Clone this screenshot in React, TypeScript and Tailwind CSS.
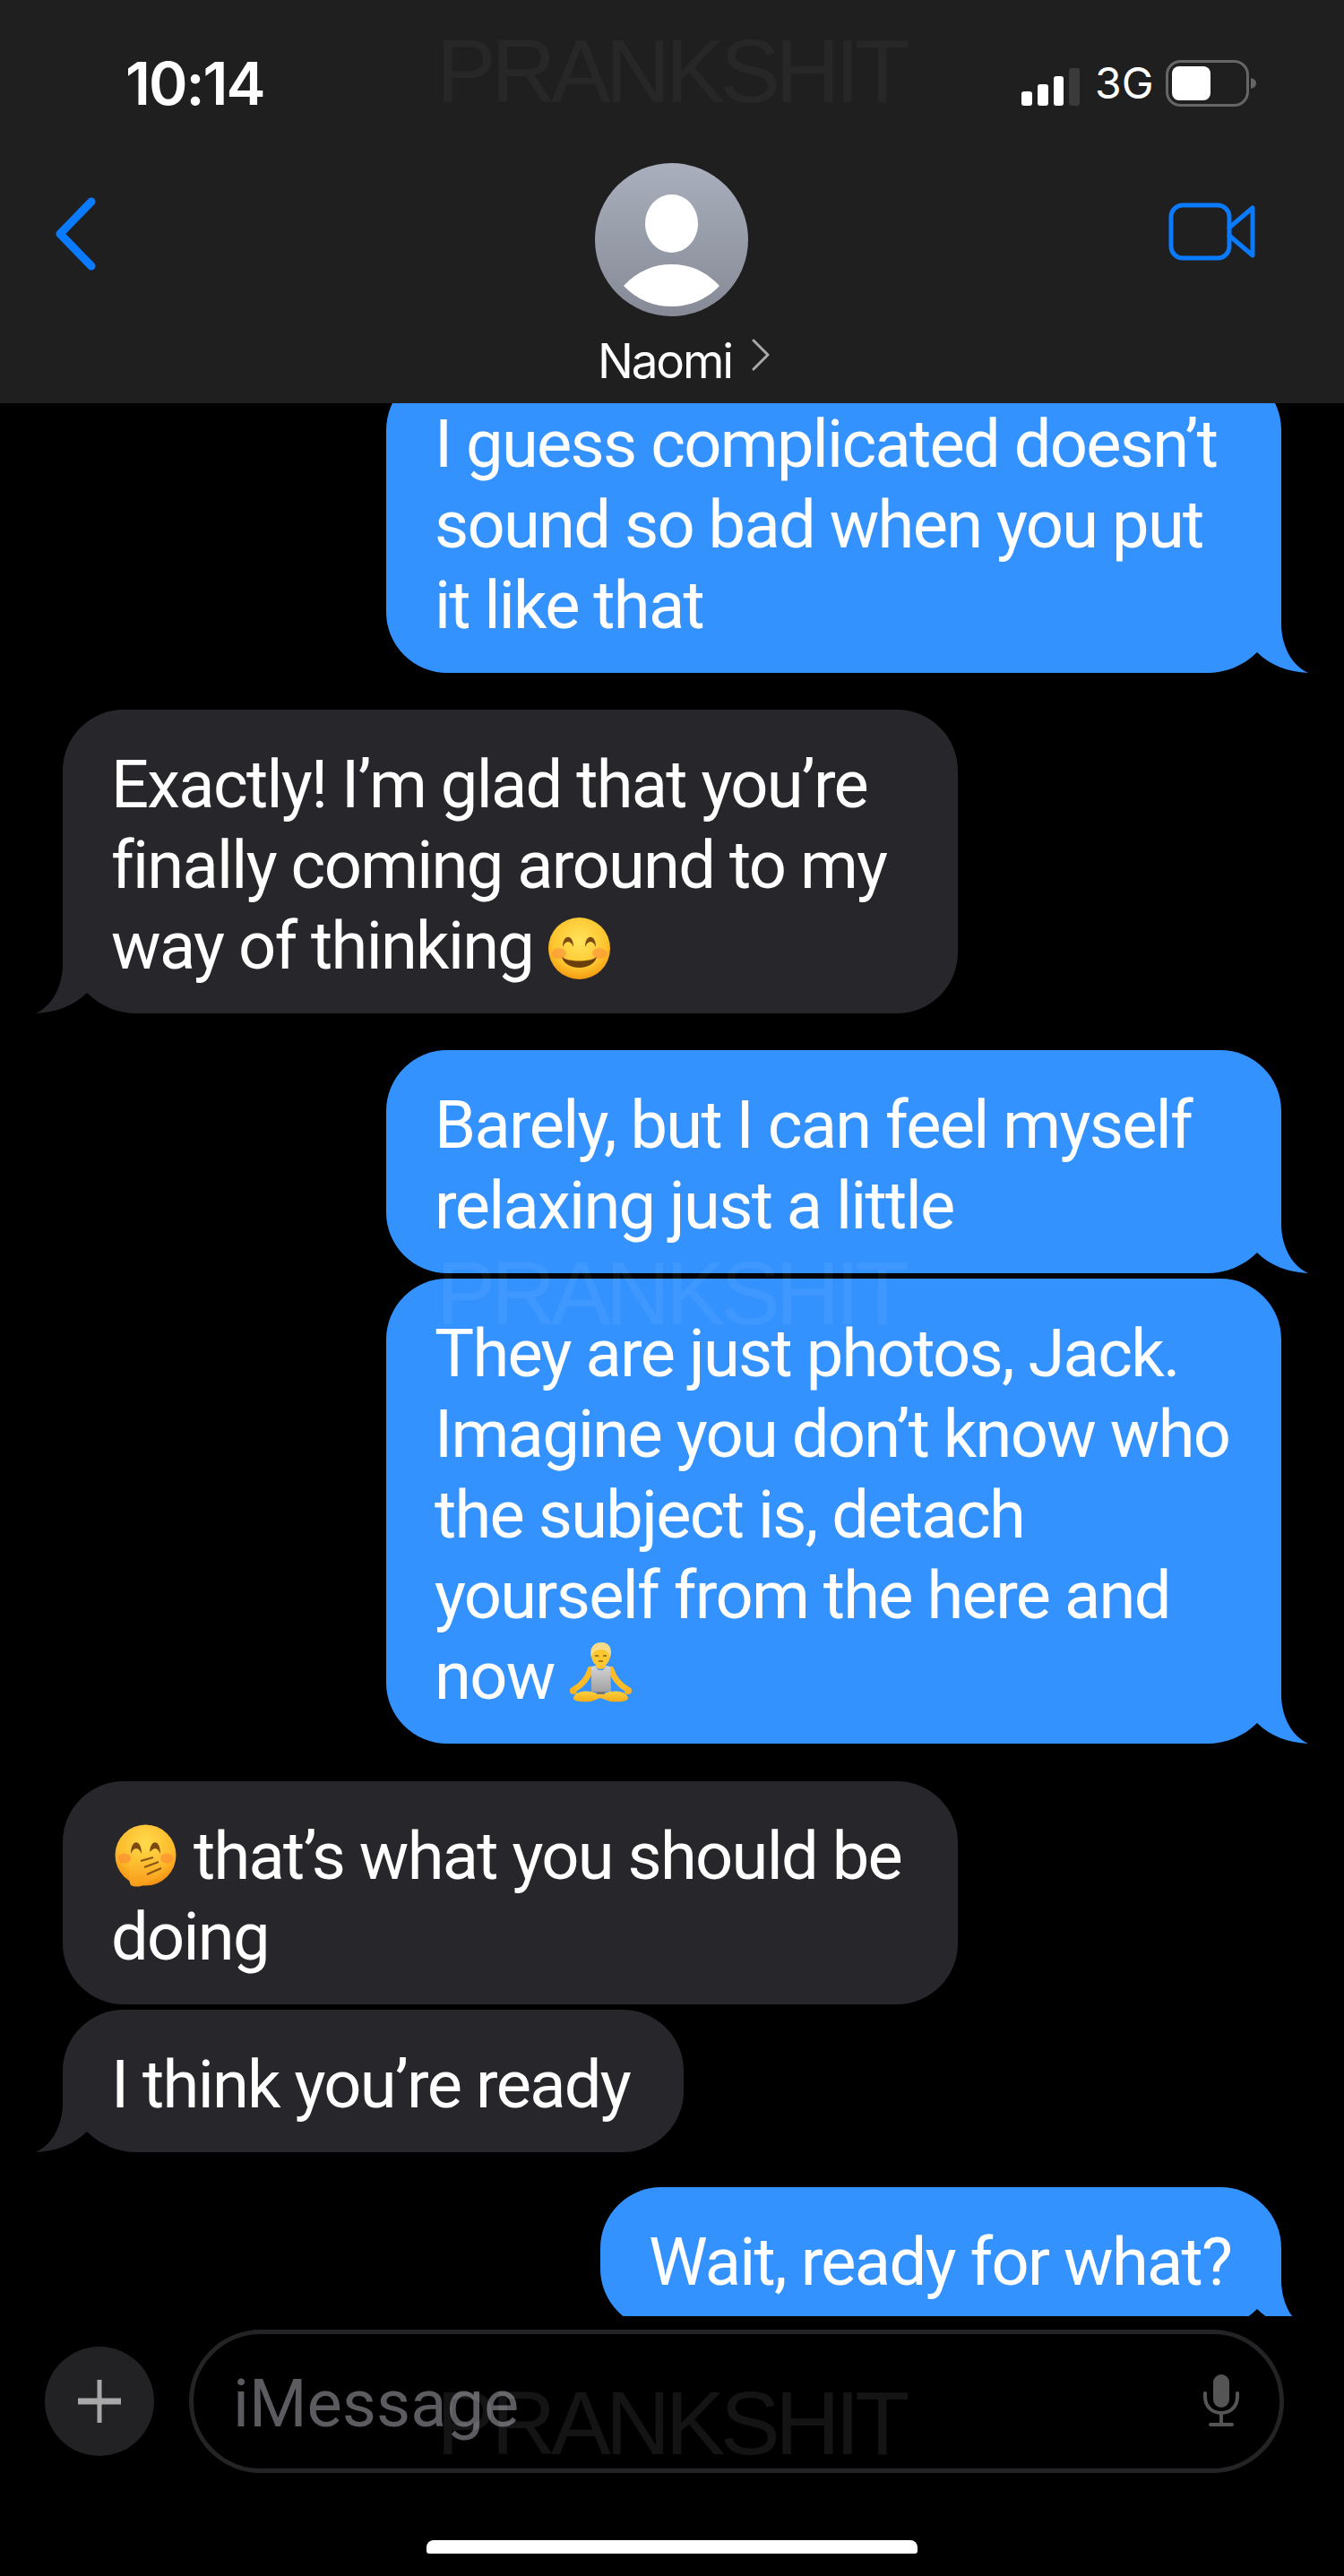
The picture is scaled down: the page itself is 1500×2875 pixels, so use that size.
import type { ReactNode } from "react"

const TailRight = ({ color }: { color: string }) => (
  <svg viewBox="-90 -90 120 90" className="absolute right-[-30px] bottom-0 w-[120px] h-[90px]">
    <path
      d="M0 -90 L0 -55 C0 -30 12 -8 30 0 C8 -1 -12 -8 -27 -23 C-42 -8 -62 0 -83 0 L-90 0 L-90 -90 Z"
      fill={color}
    />
  </svg>
)

const TailLeft = ({ color }: { color: string }) => (
  <svg viewBox="-30 -90 120 90" className="absolute left-[-30px] bottom-0 w-[120px] h-[90px]">
    <path
      d="M0 -90 L0 -55 C0 -30 -12 -8 -30 0 C-8 -1 12 -8 27 -23 C42 -8 62 0 83 0 L90 0 L90 -90 Z"
      fill={color}
    />
  </svg>
)

interface BubbleProps {
  mine?: boolean
  tail?: boolean
  width: string
  className?: string
  children: ReactNode
}

const Bubble = ({ mine, tail = true, width, className = "", children }: BubbleProps) => {
  const color = mine ? "#3492ff" : "#27272b"
  const shape = !tail
    ? "rounded-[68px]"
    : mine
      ? "rounded-[68px] rounded-br-[90px]"
      : "rounded-[68px] rounded-bl-[90px]"

  return (
    <div
      className={`relative ${mine ? "self-end bg-[#3492ff]" : "self-start bg-[#27272b]"} ${shape} ${width} ${className}`}
    >
      {tail && (mine ? <TailRight color={color} /> : <TailLeft color={color} />)}
      <div className="relative pl-[54px] pt-[39px] pb-[30px] text-white font-['Roboto',sans-serif] text-[74px] leading-[90px] tracking-[-1.7px] whitespace-nowrap">
        {children}
      </div>
    </div>
  )
}

const SmileEmoji = () => (
  <svg viewBox="0 0 69 69" className="inline-block w-[69px] h-[69px] align-[-12px]">
    <defs>
      <radialGradient id="smileFace" cx="50%" cy="38%" r="62%">
        <stop offset="0%" stopColor="#ffe45c" />
        <stop offset="70%" stopColor="#fdc52e" />
        <stop offset="100%" stopColor="#f49a12" />
      </radialGradient>
    </defs>
    <circle cx="34.5" cy="34.5" r="34.5" fill="url(#smileFace)" />
    <ellipse cx="12" cy="40" rx="8" ry="6" fill="#fb8a3c" opacity="0.55" />
    <ellipse cx="57" cy="40" rx="8" ry="6" fill="#fb8a3c" opacity="0.55" />
    <path d="M16 33 C16 18 28 18 28 33 C25 25 19 25 16 33 Z" fill="#7a4a12" />
    <path d="M41 33 C41 18 53 18 53 33 C50 25 44 25 41 33 Z" fill="#7a4a12" />
    <path d="M15 44 C22 50 47 50 54 44 C50 60 19 60 15 44 Z" fill="#6b3f0c" />
  </svg>
)

const HandEmoji = () => (
  <svg viewBox="0 0 69 71" className="inline-block w-[69px] h-[71px] align-[-10px] ml-[4px] mr-[19px]">
    <defs>
      <radialGradient id="handFace" cx="50%" cy="30%" r="72%">
        <stop offset="0%" stopColor="#ffdb4d" />
        <stop offset="65%" stopColor="#fdb92a" />
        <stop offset="100%" stopColor="#f28c0f" />
      </radialGradient>
      <linearGradient id="handSkin" x1="0" y1="0" x2="0" y2="1">
        <stop offset="0%" stopColor="#ffcf3f" />
        <stop offset="100%" stopColor="#f79a1a" />
      </linearGradient>
    </defs>
    <circle cx="34.5" cy="34.5" r="34" fill="url(#handFace)" />
    <ellipse cx="11" cy="38" rx="7" ry="5.5" fill="#fb7d35" opacity="0.5" />
    <ellipse cx="58" cy="38" rx="7" ry="5.5" fill="#fb7d35" opacity="0.5" />
    <path d="M18 33 C18 16 30 16 30 33 C27 25 21 25 18 33 Z" fill="#7a4a12" />
    <path d="M39 33 C39 16 51 16 51 33 C48 25 42 25 39 33 Z" fill="#7a4a12" />
    <path
      d="M18 68 C25 72 36 68 42 62 C50 58 55 52 52 49 C55 45 53 41 49 42 C50 37 46 35 43 37 C46 33 44 29 40 30 L29 39 C27 35 26 33 25 37 L23 43 L18 46 C16 55 15 62 18 68 Z"
      fill="url(#handSkin)"
    />
    <path d="M29 41 L43 37 M33 48 L49 42 M36 56 L52 49" stroke="#8a5410" strokeWidth="2" fill="none" />
  </svg>
)

const MeditateEmoji = () => (
  <svg viewBox="0 0 71 67" className="inline-block w-[71px] h-[67px] align-[-4px]">
    <defs>
      <linearGradient id="tank" x1="0" y1="0" x2="0" y2="1">
        <stop offset="0%" stopColor="#d4d4d4" />
        <stop offset="100%" stopColor="#a2a2a2" />
      </linearGradient>
      <linearGradient id="skin" x1="0" y1="0" x2="0" y2="1">
        <stop offset="0%" stopColor="#ffd23e" />
        <stop offset="100%" stopColor="#f5ab19" />
      </linearGradient>
    </defs>
    {/* arms */}
    <path d="M24 30 C21 40 16 47 5 53" fill="none" stroke="#fcbc28" strokeWidth="6.5" strokeLinecap="round" />
    <path d="M47 30 C50 40 55 47 66 53" fill="none" stroke="#fcbc28" strokeWidth="6.5" strokeLinecap="round" />
    <circle cx="5" cy="54" r="4" fill="#f9b424" />
    <circle cx="66" cy="54" r="4" fill="#f9b424" />
    <path d="M30 26 L30 20 L41 20 L41 26 C41 31 30 31 30 26 Z" fill="#fcc42c" />
    <path d="M25 27 L30 26 C31 33 40 33 41 26 L46 27 L47 55 L25 55 Z" fill="url(#tank)" />
    <path
      d="M5 62 C6 56 15 53 25 55 L35 58 L46 55 C56 53 65 56 66 62 C66 66 58 67 46 66 L35 62 L25 66 C13 67 5 66 5 62 Z"
      fill="url(#skin)"
    />
    <rect x="31" y="55" width="9" height="3" fill="#777" />
    <ellipse cx="35.5" cy="14" rx="10.5" ry="13" fill="#fdc82f" />
    <path d="M25 17 C22 6 28 0 36 0 C45 0 49 7 46 17 C45 11 41 8 36 8 C30 8 26 11 25 17 Z" fill="#f6dc8a" />
    <path d="M29 15 L33 15 M38 15 L42 15 M33 21 L38 21" stroke="#8a5a10" strokeWidth="1.4" />
  </svg>
)

const Watermark = ({ className }: { className: string }) => (
  <div
    className={`absolute left-[487px] font-['Liberation_Sans',sans-serif] text-[100px] leading-[100px] tracking-[-5.5px] whitespace-nowrap pointer-events-none ${className}`}
  >
    PRANKSHIT
  </div>
)

const StatusIcons = () => (
  <div className="flex items-center h-[72px] text-white">
    <svg viewBox="0 0 65 42" className="w-[65px] h-[42px] mt-[8px]">
      <rect x="0" y="26" width="12" height="16" rx="3" fill="#fff" />
      <rect x="18" y="18" width="12" height="24" rx="3" fill="#fff" />
      <rect x="36" y="9" width="11" height="33" rx="3" fill="#fff" />
      <rect x="53" y="0" width="12" height="42" rx="3" fill="#3a3a3a" />
    </svg>
    <span className="ml-[17px] w-[65px] text-center text-[48px] leading-none">3G</span>
    <svg viewBox="0 0 101 52" className="ml-[14px] w-[101px] h-[52px]">
      <rect x="1.5" y="1.5" width="90" height="49" rx="15" fill="none" stroke="#666" strokeWidth="3" />
      <rect x="7" y="7" width="43" height="38" rx="8" fill="#fff" />
      <path d="M95 20 C99 21 101 23 101 26 C101 29 99 31 95 32 Z" fill="#666" />
    </svg>
  </div>
)

const Header = () => (
  <div className="h-[450px] shrink-0 bg-[#1f1f1f] flex flex-col">
    <div className="h-[182px] shrink-0 flex items-start justify-between pt-[57px] pl-[140px] pr-[98px]">
      <span className="text-white text-[66px] leading-[72px] font-semibold tracking-[-0.03em]">10:14</span>
      <StatusIcons />
    </div>
    <div className="grid grid-cols-[1fr_auto_1fr] items-start px-[58px]">
      <svg viewBox="0 0 50 82" className="mt-[38px] w-[50px] h-[82px]">
        <path d="M44 5 L9 41 L44 77" fill="none" stroke="#0a7aff" strokeWidth="9" strokeLinecap="round" strokeLinejoin="round" />
      </svg>
      <div className="flex flex-col items-center">
        <svg viewBox="0 0 171 171" className="w-[171px] h-[171px]">
          <defs>
            <linearGradient id="avatarBg" x1="0" y1="0" x2="0" y2="1">
              <stop offset="0%" stopColor="#a9afbc" />
              <stop offset="100%" stopColor="#858a96" />
            </linearGradient>
          </defs>
          <circle cx="85.5" cy="85.5" r="85.5" fill="url(#avatarBg)" />
          <ellipse cx="85.5" cy="67.5" rx="29.5" ry="32.5" fill="#fff" />
          <path d="M32 137 C48 120 66 113 85.5 113 C105 113 123 120 139 137 C124 153 105 160 85.5 160 C66 160 47 153 32 137 Z" fill="#fff" />
        </svg>
        <div className="ml-[26px] mt-[14px] flex items-start text-white text-[53px] leading-[72px] tracking-[-0.04em] whitespace-nowrap">
          Naomi
          <svg viewBox="0 0 20 36" className="ml-[22px] mt-[11px] w-[20px] h-[36px]">
            <path d="M2 2 L18 18 L2 34" fill="none" stroke="#aaa" strokeWidth="3" strokeLinecap="round" strokeLinejoin="round" />
          </svg>
        </div>
      </div>
      <svg viewBox="0 0 100 66" className="mt-[43px] mr-[40px] w-[100px] h-[66px] justify-self-end">
        <rect x="5" y="4" width="65" height="59" rx="13" fill="none" stroke="#0a7aff" strokeWidth="5" />
        <path d="M70 29 L96 7 L96 60 L70 38" fill="none" stroke="#0a7aff" strokeWidth="5" strokeLinejoin="round" strokeLinecap="round" />
      </svg>
    </div>
  </div>
)

const Messages = () => (
  <div className="h-[2135px] shrink-0 overflow-hidden flex flex-col px-[70px]">
    <Bubble mine width="w-[999px]" className="-mt-[38px]">
      I guess complicated doesn’t
      <br />
      sound so bad when you put
      <br />
      it like that
    </Bubble>
    <Bubble width="w-[999px]" className="mt-[41px]">
      Exactly! I’m glad that you’re
      <br />
      finally coming around to my
      <br />
      way of thinking <SmileEmoji />
    </Bubble>
    <Bubble mine width="w-[999px]" className="mt-[41px]">
      Barely, but I can feel myself
      <br />
      relaxing just a little
    </Bubble>
    <Bubble mine width="w-[999px]" className="mt-[6px]">
      They are just photos, Jack.
      <br />
      Imagine you don’t know who
      <br />
      the subject is, detach
      <br />
      yourself from the here and
      <br />
      now <MeditateEmoji />
    </Bubble>
    <Bubble tail={false} width="w-[999px]" className="mt-[42px]">
      <HandEmoji />
      that’s what you should be
      <br />
      doing
    </Bubble>
    <Bubble width="w-[693px]" className="mt-[6px]">
      I think you’re ready
    </Bubble>
    <Bubble mine width="w-[760px]" className="mt-[39px]">
      Wait, ready for what?
    </Bubble>
  </div>
)

const Composer = () => (
  <div className="flex items-center gap-[39px] pt-[15px] pl-[50px]">
    <div className="w-[122px] h-[122px] rounded-full bg-[#222224] flex items-center justify-center">
      <svg viewBox="0 0 48 48" className="w-[48px] h-[48px]">
        <path d="M24 1 L24 47" stroke="#a8a8a8" strokeWidth="5" strokeLinecap="round" />
        <path d="M1 24 L47 24" stroke="#a8a8a8" strokeWidth="7" strokeLinecap="round" />
      </svg>
    </div>
    <div className="w-[1222px] h-[160px] rounded-[80px] border-[5px] border-[#242426] flex items-center justify-between pl-[44px] pr-[45px]">
      <span className="mt-[6px] text-[#5b5b60] font-['Roboto',sans-serif] text-[74px] leading-[90px]">iMessage</span>
      <svg viewBox="0 0 40 60" className="w-[40px] h-[60px]">
        <rect x="11" y="0" width="18" height="37" rx="9" fill="#555" />
        <path d="M2 21 L2 25 C2 36 10 43 20 43 C30 43 38 36 38 25 L38 21" fill="none" stroke="#555" strokeWidth="4" strokeLinecap="round" />
        <path d="M20 43 L20 55 M8 56 L32 56" stroke="#555" strokeWidth="4" strokeLinecap="round" />
      </svg>
    </div>
  </div>
)

export default function App() {
  return (
    <div className="relative w-[1500px] h-[2875px] bg-black overflow-hidden flex flex-col font-['Inter','Liberation_Sans',sans-serif]">
      <Header />
      <Messages />
      <Composer />
      <div className="mt-[75px] mx-auto w-[548px] h-[15px] rounded-t-[8px] rounded-b-[3px] bg-white" />
      <Watermark className="top-[29px] text-white/[0.04]" />
      <Watermark className="top-[1393px] text-white/[0.06]" />
      <Watermark className="top-[2654px] text-white/[0.08]" />
    </div>
  )
}
